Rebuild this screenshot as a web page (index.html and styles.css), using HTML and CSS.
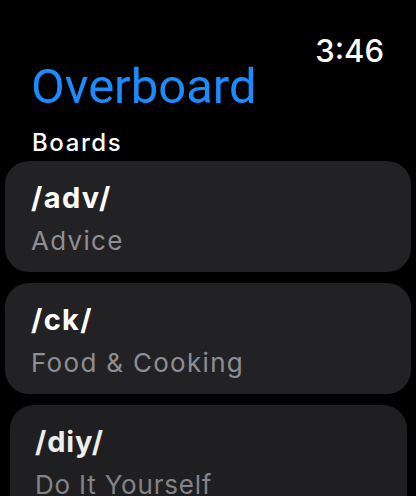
FILE: index.html
```html
<!DOCTYPE html>
<html lang="en">
<head>
<meta charset="UTF-8">
<meta name="viewport" content="width=device-width, initial-scale=1.0">
<title>Overboard</title>
<link rel="stylesheet" href="styles.css">
</head>
<body class="watch">
  <div class="status">
    <span class="clock">3:46</span>
  </div>
  <h1 class="title">Overboard</h1>
  <h2 class="section">Boards</h2>
  <div class="list">
    <div class="board">
      <div class="board-code">/adv/</div>
      <div class="board-name">Advice</div>
    </div>
    <div class="board">
      <div class="board-code">/ck/</div>
      <div class="board-name">Food &amp; Cooking</div>
    </div>
    <div class="board board-far">
      <div class="board-code">/diy/</div>
      <div class="board-name">Do It Yourself</div>
    </div>
  </div>
</body>
</html>
```

FILE: styles.css
```css
.watch {
  margin: 0;
  height: 496px;
  overflow: hidden;
  background-color: #000;
  color: #fff;
  font-family: Inter, "Noto Sans", sans-serif;
}
.status {
  display: flex;
  justify-content: flex-end;
  padding: 36px 32px 0 0;
  height: 30px;
}
.clock {
  font-size: 31px;
  font-weight: 500;
  line-height: 30px;
}
.title {
  margin: -3px 0 0 31px;
  font-family: Roboto, sans-serif;
  font-size: 49px;
  font-weight: 400;
  line-height: 48px;
  color: #1a8cff;
}
.section {
  margin: 17px 0 0 32px;
  font-size: 24px;
  font-weight: 500;
  line-height: 30px;
  letter-spacing: 1.6px;
}
.list {
  display: flex;
  flex-direction: column;
  gap: 11px;
  margin-top: 3px;
}
.board {
  margin: 0 5px;
  height: 111px;
  box-sizing: border-box;
  padding: 19px 26px 0;
  border-radius: 24px;
  background-color: #222224;
}
.board-code {
  font-size: 29px;
  font-weight: 700;
  line-height: 36px;
  letter-spacing: 1.4px;
}
.board-name {
  margin-top: 9px;
  font-size: 26px;
  line-height: 32px;
  color: #8e8e93;
  letter-spacing: 1.3px;
}
.board-far {
  margin: 0 9px 0 10px;
  padding-left: 25px;
  opacity: 0.93;
}
.board-far .board-code {
  letter-spacing: 0.9px;
}
.board-far .board-name {
  letter-spacing: 0.8px;
}
```
